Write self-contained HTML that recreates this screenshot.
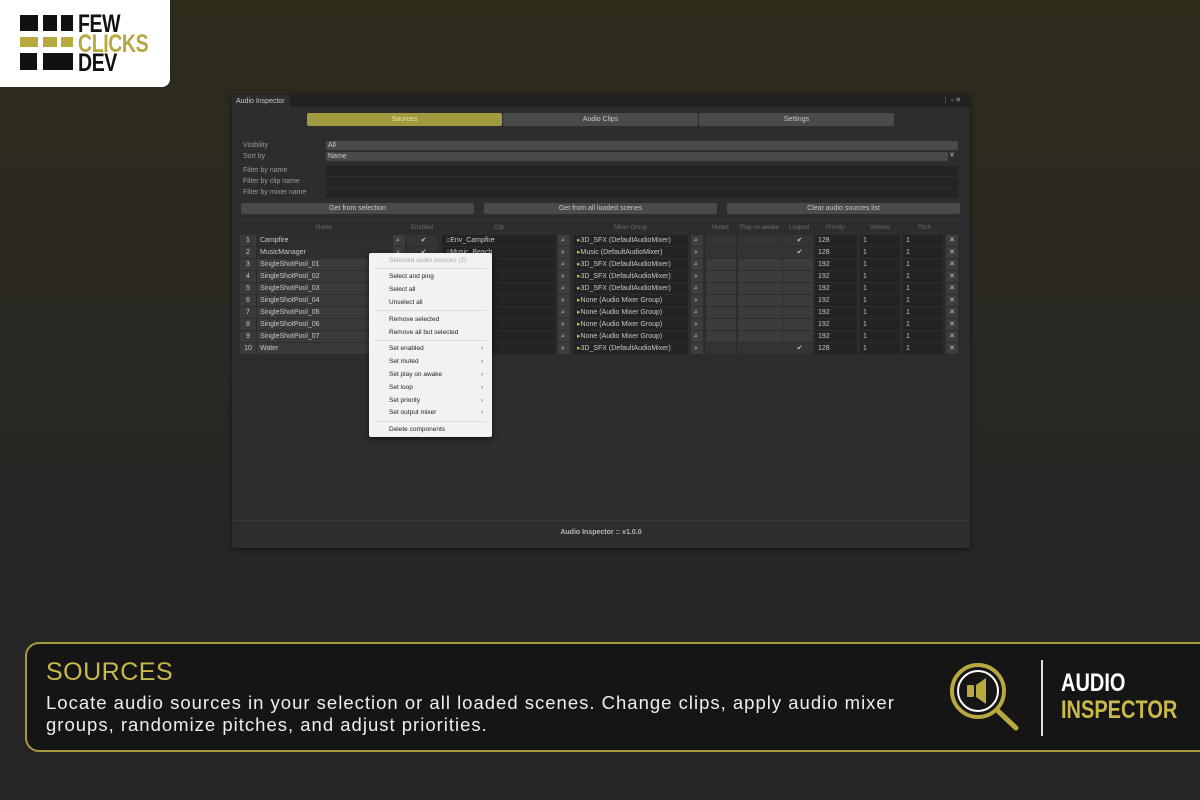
<!DOCTYPE html><html><head><style>
*{margin:0;padding:0;box-sizing:border-box}
body{width:1200px;height:800px;overflow:hidden;position:relative;font-family:"Liberation Sans",sans-serif;background:linear-gradient(180deg,#2f2b1b 0%,#2b2922 35%,#262626 70%,#252525 100%)}
.a{position:absolute}
.win{left:232px;top:94px;width:738px;height:454px;background:#2d2d2d;border-radius:3px;box-shadow:0 2px 6px rgba(0,0,0,.5)}
.t{font-size:7px;color:#bdbdbd;white-space:nowrap;line-height:11px}
.lbl{font-size:7px;color:#9a9a9a}
.fld{background:#242424;border-radius:2px}
.btn{background:#4a4a4a;border-radius:2px;font-size:7px;color:#c8c8c8;text-align:center;line-height:11px}
.row{position:absolute;left:240px;width:720px;height:11px}
.row div{position:absolute;top:0;height:11px;font-size:7px;line-height:11px;color:#c8c8c8;padding-left:3px;white-space:nowrap;overflow:hidden}
.c0{left:0;width:16px;background:#3a3a3a;text-align:center;padding:0!important}
.c1{left:17px;width:135px;background:#3a3a3a}
.ic{width:12px;background:#3d3d3d}
.in{background:#232323}
.cb{width:30px;background:#343434}
.menu{left:369px;top:253px;width:123px;height:184px;background:#f2f2f2;border-radius:2px;box-shadow:0 2px 6px rgba(0,0,0,.6)}
.menu div{position:absolute;left:20px;font-size:6.5px;color:#222;white-space:nowrap}
.menu .s{left:6px;width:111px;height:1px;background:#dcdcdc}
.menu .ar{left:112px;color:#555}
.lg{font:bold 25px/20px 'Liberation Sans',sans-serif;transform:scaleX(.78);transform-origin:left;letter-spacing:-0.5px}
</style></head><body>
<div class="a" style="left:0;top:0;width:170px;height:87px;background:#fff;border-bottom-right-radius:8px"></div>
<svg class="a" style="left:20px;top:15px" width="54" height="56">
<g fill="#111"><rect x="0" y="0" width="18" height="16"/><rect x="23" y="0" width="14" height="16"/><rect x="41" y="0" width="12" height="16"/>
<rect x="0" y="38" width="17" height="17"/><rect x="23" y="38" width="30" height="17"/></g>
<g fill="#b8a840"><rect x="0" y="22" width="18" height="10"/><rect x="23" y="22" width="14" height="10"/><rect x="41" y="22" width="12" height="10"/></g></svg>
<div class="a lg" style="left:78px;top:14px;color:#111">FEW</div>
<div class="a lg" style="left:78px;top:34px;color:#b8a840">CLICKS</div>
<div class="a lg" style="left:78px;top:53px;color:#111">DEV</div>

<div class="a win"></div>
<div class="a" style="left:232px;top:94px;width:738px;height:13px;background:#212121"></div>
<div class="a" style="left:232px;top:95px;width:58px;height:12px;background:#2d2d2d"></div>
<div class="a t" style="left:236px;top:96px;color:#c8c8c8">Audio Inspector</div>
<div class="a t" style="left:942px;top:95px;color:#aaa">⋮ ▫ ✕</div>
<div class="a btn" style="left:307px;top:113px;width:195px;height:13px;background:#a29a3e;color:#e8e2b0;line-height:13px">Sources</div>
<div class="a btn" style="left:503px;top:113px;width:195px;height:13px;line-height:13px">Audio Clips</div>
<div class="a btn" style="left:699px;top:113px;width:195px;height:13px;line-height:13px">Settings</div>
<div class="a lbl" style="left:243px;top:142px">Visibility</div>
<div class="a lbl" style="left:243px;top:153px">Sort by</div>
<div class="a btn" style="left:326px;top:141px;width:632px;height:9px;text-align:left;padding-left:2px;line-height:9px">All</div>
<div class="a btn" style="left:326px;top:152px;width:622px;height:9px;text-align:left;padding-left:2px;line-height:9px">Name</div>
<div class="a t" style="left:950px;top:150px;color:#aaa">¥</div>
<div class="a lbl" style="left:243px;top:167px">Filter by name</div>
<div class="a lbl" style="left:243px;top:178px">Filter by clip name</div>
<div class="a lbl" style="left:243px;top:189px">Filter by mixer name</div>
<div class="a fld" style="left:326px;top:166px;width:632px;height:10px"></div>
<div class="a fld" style="left:326px;top:177px;width:632px;height:10px"></div>
<div class="a fld" style="left:326px;top:188px;width:632px;height:10px"></div>
<div class="a btn" style="left:241px;top:203px;width:233px;height:11px">Get from selection</div>
<div class="a btn" style="left:484px;top:203px;width:233px;height:11px">Get from all loaded scenes</div>
<div class="a btn" style="left:727px;top:203px;width:233px;height:11px">Clear audio sources list</div>
<div class="a" style="left:240px;top:220px;width:720px;height:1px;background:#363636"></div>
<div class="a lbl" style="top:225px;left:0;width:1200px;font-size:6px;color:#6a6a6a">
<span class="a" style="left:316px">Name</span><span class="a" style="left:411px">Enabled</span><span class="a" style="left:494px">Clip</span><span class="a" style="left:614px">Mixer Group</span><span class="a" style="left:712px">Muted</span><span class="a" style="left:740px">Play on awake</span><span class="a" style="left:789px">Looped</span><span class="a" style="left:826px">Priority</span><span class="a" style="left:870px">Volume</span><span class="a" style="left:918px">Pitch</span></div>

<div class="row" style="top:235px"><div class="c0">1</div><div class="c1" style="background:#2f2f2f">Campfire</div><div class="ic" style="left:153px">⌕</div><div class="cb" style="left:167px;text-align:center">✔</div><div class="in" style="left:202px;width:114px"><span style="color:#d9b43a">♫</span>Env_Campfire</div><div class="ic" style="left:318px">⌕</div><div class="in" style="left:334px;width:114px"><span style="color:#d9b43a">▸</span>3D_SFX (DefaultAudioMixer)</div><div class="ic" style="left:451px">⌕</div><div class="cb" style="left:466px"></div><div class="cb" style="left:498px;width:44px"></div><div class="cb" style="left:543px;text-align:center">✔</div><div class="in" style="left:575px;width:42px">128</div><div class="in" style="left:620px;width:40px">1</div><div class="in" style="left:663px;width:40px">1</div><div class="ic" style="left:706px;text-align:center;padding:0">✕</div></div>
<div class="row" style="top:247px"><div class="c0">2</div><div class="c1" style="background:#2f2f2f">MusicManager</div><div class="ic" style="left:153px">⌕</div><div class="cb" style="left:167px;text-align:center">✔</div><div class="in" style="left:202px;width:114px"><span style="color:#d9b43a">♫</span>Music_Beach</div><div class="ic" style="left:318px">⌕</div><div class="in" style="left:334px;width:114px"><span style="color:#d9b43a">▸</span>Music (DefaultAudioMixer)</div><div class="ic" style="left:451px">⌕</div><div class="cb" style="left:466px"></div><div class="cb" style="left:498px;width:44px"></div><div class="cb" style="left:543px;text-align:center">✔</div><div class="in" style="left:575px;width:42px">128</div><div class="in" style="left:620px;width:40px">1</div><div class="in" style="left:663px;width:40px">1</div><div class="ic" style="left:706px;text-align:center;padding:0">✕</div></div>
<div class="row" style="top:259px"><div class="c0">3</div><div class="c1">SingleShotPool_01</div><div class="in" style="left:202px;width:114px">Long</div><div class="ic" style="left:318px">⌕</div><div class="in" style="left:334px;width:114px"><span style="color:#d9b43a">▸</span>3D_SFX (DefaultAudioMixer)</div><div class="ic" style="left:451px">⌕</div><div class="cb" style="left:466px;background:#3c3c3c"></div><div class="cb" style="left:498px;width:44px;background:#3c3c3c"></div><div class="cb" style="left:543px;background:#3c3c3c"></div><div class="in" style="left:575px;width:42px">192</div><div class="in" style="left:620px;width:40px">1</div><div class="in" style="left:663px;width:40px">1</div><div class="ic" style="left:706px;text-align:center;padding:0">✕</div></div>
<div class="row" style="top:271px"><div class="c0">4</div><div class="c1">SingleShotPool_02</div><div class="in" style="left:202px;width:114px"></div><div class="ic" style="left:318px">⌕</div><div class="in" style="left:334px;width:114px"><span style="color:#d9b43a">▸</span>3D_SFX (DefaultAudioMixer)</div><div class="ic" style="left:451px">⌕</div><div class="cb" style="left:466px;background:#3c3c3c"></div><div class="cb" style="left:498px;width:44px;background:#3c3c3c"></div><div class="cb" style="left:543px;background:#3c3c3c"></div><div class="in" style="left:575px;width:42px">192</div><div class="in" style="left:620px;width:40px">1</div><div class="in" style="left:663px;width:40px">1</div><div class="ic" style="left:706px;text-align:center;padding:0">✕</div></div>
<div class="row" style="top:283px"><div class="c0">5</div><div class="c1">SingleShotPool_03</div><div class="in" style="left:202px;width:114px"></div><div class="ic" style="left:318px">⌕</div><div class="in" style="left:334px;width:114px"><span style="color:#d9b43a">▸</span>3D_SFX (DefaultAudioMixer)</div><div class="ic" style="left:451px">⌕</div><div class="cb" style="left:466px;background:#3c3c3c"></div><div class="cb" style="left:498px;width:44px;background:#3c3c3c"></div><div class="cb" style="left:543px;background:#3c3c3c"></div><div class="in" style="left:575px;width:42px">192</div><div class="in" style="left:620px;width:40px">1</div><div class="in" style="left:663px;width:40px">1</div><div class="ic" style="left:706px;text-align:center;padding:0">✕</div></div>
<div class="row" style="top:295px"><div class="c0">6</div><div class="c1">SingleShotPool_04</div><div class="in" style="left:202px;width:114px">Clip)</div><div class="ic" style="left:318px">⌕</div><div class="in" style="left:334px;width:114px"><span style="color:#d9b43a">▸</span>None (Audio Mixer Group)</div><div class="ic" style="left:451px">⌕</div><div class="cb" style="left:466px;background:#3c3c3c"></div><div class="cb" style="left:498px;width:44px;background:#3c3c3c"></div><div class="cb" style="left:543px;background:#3c3c3c"></div><div class="in" style="left:575px;width:42px">192</div><div class="in" style="left:620px;width:40px">1</div><div class="in" style="left:663px;width:40px">1</div><div class="ic" style="left:706px;text-align:center;padding:0">✕</div></div>
<div class="row" style="top:307px"><div class="c0">7</div><div class="c1">SingleShotPool_05</div><div class="in" style="left:202px;width:114px">Clip)</div><div class="ic" style="left:318px">⌕</div><div class="in" style="left:334px;width:114px"><span style="color:#d9b43a">▸</span>None (Audio Mixer Group)</div><div class="ic" style="left:451px">⌕</div><div class="cb" style="left:466px;background:#3c3c3c"></div><div class="cb" style="left:498px;width:44px;background:#3c3c3c"></div><div class="cb" style="left:543px;background:#3c3c3c"></div><div class="in" style="left:575px;width:42px">192</div><div class="in" style="left:620px;width:40px">1</div><div class="in" style="left:663px;width:40px">1</div><div class="ic" style="left:706px;text-align:center;padding:0">✕</div></div>
<div class="row" style="top:319px"><div class="c0">8</div><div class="c1">SingleShotPool_06</div><div class="in" style="left:202px;width:114px">Clip)</div><div class="ic" style="left:318px">⌕</div><div class="in" style="left:334px;width:114px"><span style="color:#d9b43a">▸</span>None (Audio Mixer Group)</div><div class="ic" style="left:451px">⌕</div><div class="cb" style="left:466px;background:#3c3c3c"></div><div class="cb" style="left:498px;width:44px;background:#3c3c3c"></div><div class="cb" style="left:543px;background:#3c3c3c"></div><div class="in" style="left:575px;width:42px">192</div><div class="in" style="left:620px;width:40px">1</div><div class="in" style="left:663px;width:40px">1</div><div class="ic" style="left:706px;text-align:center;padding:0">✕</div></div>
<div class="row" style="top:331px"><div class="c0">9</div><div class="c1">SingleShotPool_07</div><div class="in" style="left:202px;width:114px">Clip)</div><div class="ic" style="left:318px">⌕</div><div class="in" style="left:334px;width:114px"><span style="color:#d9b43a">▸</span>None (Audio Mixer Group)</div><div class="ic" style="left:451px">⌕</div><div class="cb" style="left:466px;background:#3c3c3c"></div><div class="cb" style="left:498px;width:44px;background:#3c3c3c"></div><div class="cb" style="left:543px;background:#3c3c3c"></div><div class="in" style="left:575px;width:42px">192</div><div class="in" style="left:620px;width:40px">1</div><div class="in" style="left:663px;width:40px">1</div><div class="ic" style="left:706px;text-align:center;padding:0">✕</div></div>
<div class="row" style="top:343px"><div class="c0">10</div><div class="c1">Water</div><div class="in" style="left:202px;width:114px">ater</div><div class="ic" style="left:318px">⌕</div><div class="in" style="left:334px;width:114px"><span style="color:#d9b43a">▸</span>3D_SFX (DefaultAudioMixer)</div><div class="ic" style="left:451px">⌕</div><div class="cb" style="left:466px"></div><div class="cb" style="left:498px;width:44px"></div><div class="cb" style="left:543px;text-align:center">✔</div><div class="in" style="left:575px;width:42px">128</div><div class="in" style="left:620px;width:40px">1</div><div class="in" style="left:663px;width:40px">1</div><div class="ic" style="left:706px;text-align:center;padding:0">✕</div></div>

<div class="a menu">
<div style="top:4px;color:#aaa">Selected audio sources (2)</div><div class="s" style="top:15px"></div>
<div style="top:20px">Select and ping</div><div style="top:33px">Select all</div><div style="top:46px">Unselect all</div><div class="s" style="top:57px"></div>
<div style="top:63px">Remove selected</div><div style="top:76px">Remove all but selected</div><div class="s" style="top:87px"></div>
<div style="top:92px">Set enabled</div><div class="ar" style="top:92px">›</div>
<div style="top:105px">Set muted</div><div class="ar" style="top:105px">›</div>
<div style="top:118px">Set play on awake</div><div class="ar" style="top:118px">›</div>
<div style="top:131px">Set loop</div><div class="ar" style="top:131px">›</div>
<div style="top:144px">Set priority</div><div class="ar" style="top:144px">›</div>
<div style="top:156px">Set output mixer</div><div class="ar" style="top:156px">›</div><div class="s" style="top:168px"></div>
<div style="top:173px">Delete components</div>
</div>

<div class="a" style="left:233px;top:520px;width:736px;height:1px;background:#3a3a3a"></div>
<div class="a" style="left:232px;top:529px;width:738px;text-align:center;font:bold 7px 'Liberation Sans',sans-serif;color:#b8b8b8">Audio Inspector :: v1.0.0</div>

<div class="a" style="left:25px;top:642px;width:1200px;height:110px;background:#151515;border:2px solid #a89a3c;border-radius:14px"></div>
<div class="a" style="left:46px;top:658px;font-size:25px;color:#c9b84a;letter-spacing:0.5px">SOURCES</div>
<div class="a" style="left:46px;top:692px;font-size:18.5px;line-height:22px;color:#eee;letter-spacing:1px;white-space:nowrap">Locate audio sources in your selection or all loaded scenes. Change clips, apply audio mixer<br>groups, randomize pitches, and adjust priorities.</div>
<svg class="a" style="left:948px;top:660px" width="76" height="74">
<circle cx="30" cy="31" r="26" fill="none" stroke="#b8a840" stroke-width="4"/>
<circle cx="30" cy="31" r="20" fill="#151515" stroke="#fff" stroke-width="2"/>
<rect x="19" y="25" width="7" height="12" rx="1" fill="#b8a840"/>
<path d="M28 25 L38 18 L38 44 L28 37Z" fill="#b8a840"/>
<line x1="50" y1="51" x2="68" y2="68" stroke="#b8a840" stroke-width="5" stroke-linecap="round"/>
</svg>
<div class="a" style="left:1041px;top:660px;width:2px;height:76px;background:#ddd"></div>
<div class="a" style="left:1061px;top:671px;font:bold 25px/25px 'Liberation Sans',sans-serif;color:#fff;transform:scaleX(.8);transform-origin:left">AUDIO</div>
<div class="a" style="left:1061px;top:698px;font:bold 25px/25px 'Liberation Sans',sans-serif;color:#c9b84a;transform:scaleX(.8);transform-origin:left">INSPECTOR</div>
</body></html>
